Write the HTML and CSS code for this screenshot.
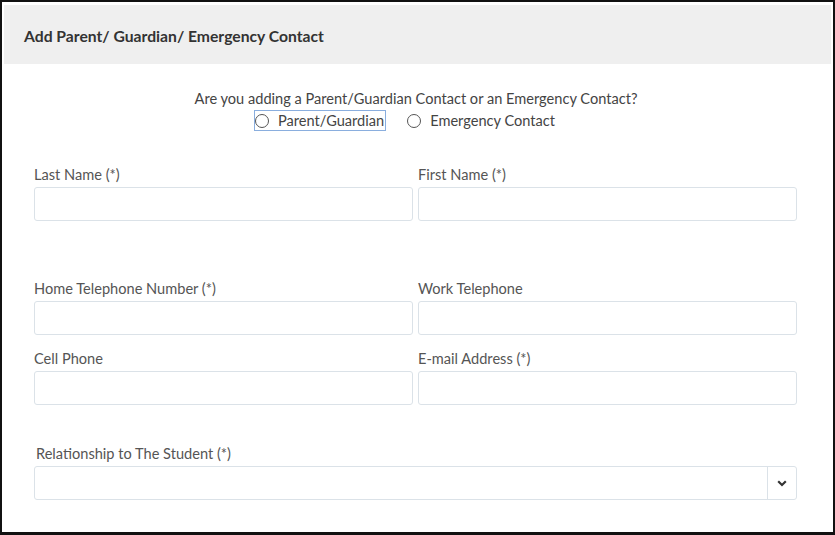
FILE: index.html
```html
<!DOCTYPE html>
<html lang="en">
<head>
    <meta charset="UTF-8">
    <title>Add Parent/ Guardian/ Emergency Contact</title>
    <link rel="stylesheet" href="styles.css">
</head>
<body>
    <div class="frame">
        <div class="panel-header">Add Parent/ Guardian/ Emergency Contact</div>

        <div class="panel-body">
            <!-- contact type -->
            <div class="contact-type">
                <div class="question">Are you adding a Parent/Guardian Contact or an Emergency Contact?</div>
                <div class="radio-row">
                    <label class="radio focused"><span class="radio-circle"></span>Parent/Guardian</label>
                    <label class="radio"><span class="radio-circle"></span>Emergency Contact</label>
                </div>
            </div>

            <div class="form-row first-row">
                <div class="field">
                    <div class="field-label">Last Name (*)</div>
                    <input type="text" class="field-input">
                </div>
                <div class="field">
                    <div class="field-label">First Name (*)</div>
                    <input type="text" class="field-input">
                </div>
            </div>

            <div class="form-row phone-row">
                <div class="field">
                    <div class="field-label">Home Telephone Number (*)</div>
                    <input type="text" class="field-input">
                </div>
                <div class="field">
                    <div class="field-label">Work Telephone</div>
                    <input type="text" class="field-input">
                </div>
            </div>

            <div class="form-row cell-row">
                <div class="field">
                    <div class="field-label">Cell Phone</div>
                    <input type="text" class="field-input">
                </div>
                <div class="field">
                    <div class="field-label">E-mail Address (*)</div>
                    <input type="text" class="field-input">
                </div>
            </div>

            <!-- relationship -->
            <div class="relationship">
                <div class="field-label indent">Relationship to The Student (*)</div>
                <div class="select-box">
                    <div class="select-value"></div>
                    <div class="select-arrow">
                        <svg width="10" height="7" viewBox="0 0 10 7">
                            <path d="M1.2 1.3 L5 5 L8.8 1.3" fill="none" stroke="#333" stroke-width="2.2"/>
                        </svg>
                    </div>
                </div>
            </div>
        </div>
    </div>
</body>
</html>
```

FILE: styles.css
```css
* {
    box-sizing: border-box;
    margin: 0;
    padding: 0;
}

body {
    font-family: Lato, "Open Sans", sans-serif;
    background-color: #fff;
    color: #555;
}

.frame {
    width: 835px;
    height: 535px;
    border: 2px solid #111;
    border-bottom-width: 3px;
    padding: 3px 2px 0 2px;
    background-color: #fff;
}

.panel-header {
    height: 59px;
    background-color: #efefef;
    padding: 21px 0 0 20px;
    font-size: 15.7px;
    font-weight: bold;
    color: #333;
    line-height: 20px;
}

.panel-body {
    padding: 0 34px 0 30px;
}

.contact-type {
    margin-top: 25px;
    text-align: center;
    font-size: 14.6px;
    color: #444;
}

.question {
    line-height: 20px;
    padding-left: 1px;
}

.radio-row {
    display: flex;
    justify-content: center;
    gap: 20px;
    padding-right: 20px;
    margin-top: 1px;
}

.radio {
    display: flex;
    align-items: center;
    height: 21px;
    padding: 0 1px 0 0;
    border: 1px solid transparent;
    line-height: 19px;
}

.radio.focused {
    border-color: #8aaede;
}

.radio-circle {
    width: 14px;
    height: 14px;
    border: 1px solid #555;
    border-radius: 50%;
    margin: 0 9px 0 0;
}

.form-row {
    display: grid;
    grid-template-columns: 1fr 1fr;
    column-gap: 5px;
}

.first-row {
    margin-top: 34px;
}

.phone-row {
    margin-top: 58px;
}

.cell-row {
    margin-top: 14px;
}

.field-label {
    font-size: 14.6px;
    line-height: 20px;
    color: #555;
    margin-bottom: 2px;
}

.field-label.indent {
    padding-left: 2px;
}

.field-input {
    display: block;
    width: 100%;
    height: 34px;
    border: 1px solid #dbe2e8;
    border-radius: 3px;
    background-color: #fff;
    font-family: inherit;
    font-size: 14px;
    padding: 6px 10px;
    outline: none;
}

.relationship {
    margin-top: 39px;
}

.select-box {
    display: flex;
    height: 34px;
    border: 1px solid #dbe2e8;
    border-radius: 3px;
}

.select-value {
    flex: 1;
}

.select-arrow {
    width: 29px;
    border-left: 1px solid #dbe2e8;
    display: flex;
    align-items: center;
    justify-content: center;
}
```
